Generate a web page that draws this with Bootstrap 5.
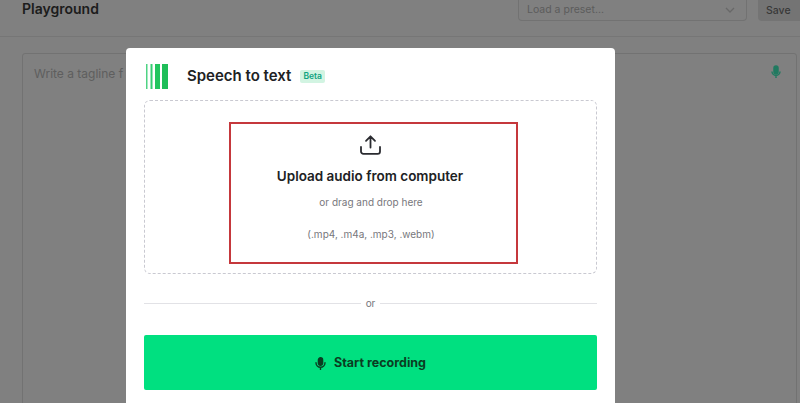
<!DOCTYPE html>
<html lang="en">
<head>
  <meta charset="UTF-8">
  <meta name="viewport" content="width=device-width, initial-scale=1.0">
  <title>Speech to text</title>
  <link href="https://cdn.jsdelivr.net/npm/bootstrap@5.3.0/dist/css/bootstrap.min.css" rel="stylesheet">
  <style>
    html, body {
      height: 100%;
      overflow: hidden;
    }
    body {
      background-color: #808080;
      font-family: Inter, "Liberation Sans", sans-serif;
      color: #202123;
    }
    /* dimmed page behind the dialog */
    .page-head {
      height: 37px;
      padding: 0 0 0 22px;
      border-bottom: 1px solid #767676;
    }
    .page-title {
      font-size: 14px;
      font-weight: 600;
      line-height: 17px;
      color: #1c1c1c;
      margin: 0;
    }
    .preset-box {
      width: 229px;
      height: 21px;
      margin-right: 11px;
      padding: 0 10px 0 8px;
      border: 1px solid #727272;
      border-top: 0;
      border-radius: 0 0 4px 4px;
      font-size: 10.5px;
      color: #5c5c5c;
    }
    .save-box {
      width: 42px;
      height: 21px;
      background: #747474;
      border-radius: 0 0 0 4px;
      font-size: 10.5px;
      font-weight: 500;
      color: #383838;
      padding-left: 8px;
    }
    .prompt-box {
      height: 360px;
      margin: 16px 3px 0 22px;
      padding: 11px 11px;
      border: 1px solid #727272;
      border-radius: 3px;
      font-size: 12px;
      color: #5e5e5e;
    }
    .prompt-mic {
      margin: 0 3px 0 0;
    }
    /* dialog */
    .dialog-box {
      position: fixed;
      left: 126px;
      top: 48px;
      width: 489px;
      height: 370px;
      padding: 15px 18px;
      background: #fff;
      border-radius: 4px;
    }
    .dialog-head {
      height: 26px;
    }
    .app-logo {
      margin-left: 2px;
    }
    .dialog-title {
      font-size: 15px;
      font-weight: 600;
      margin: 0 0 0 19px;
    }
    .beta-tag {
      margin-left: 9px;
      padding: 1px 3px;
      background: #d2f4e2;
      border-radius: 2px;
      font-size: 8.5px;
      font-weight: 600;
      line-height: 11px;
      color: #10a37f;
    }
    .drop-zone {
      height: 174px;
      margin-top: 11px;
      padding: 21px 0 0 5px;
      border: 1px dashed #c9c9d1;
      border-radius: 6px;
    }
    .red-box {
      width: 289px;
      height: 142px;
      padding-top: 11px;
      border: 2px solid #c5383c;
    }
    .upload-icon {
      display: block;
      margin: 0 auto;
      position: relative;
      left: -3px;
    }
    .upload-title {
      font-size: 13.5px;
      font-weight: 600;
      margin: 12px 0 0;
      line-height: 18px;
      position: relative;
      left: -3px;
    }
    .drop-note {
      font-size: 10px;
      color: #77777c;
      margin: 10px 0 0;
      line-height: 14px;
      position: relative;
      left: -2px;
    }
    .drop-types {
      margin-top: 18px;
    }
    .or-row {
      margin-top: 22px;
      font-size: 10px;
      color: #77777c;
      line-height: 14px;
    }
    .or-word {
      padding: 0 5px;
    }
    .or-line {
      height: 1px;
      background: #e2e2e6;
      margin-top: 1px;
    }
    .record-btn {
      height: 55px;
      margin-top: 25px;
      padding-top: 8px;
      background: #00e080;
      border: 0;
      border-radius: 2px;
      font-size: 12.5px;
      font-weight: 700;
      color: #0b3d22;
    }
    .record-btn:hover {
      background: #00e080;
      color: #0b3d22;
    }
  </style>
</head>
<body>
  <!-- page behind the dialog -->
  <div class="page-head d-flex align-items-start">
    <h1 class="page-title flex-grow-1">Playground</h1>
    <div class="preset-box d-flex align-items-center justify-content-between">
      <span>Load a preset...</span>
      <svg width="12" height="8" viewBox="0 0 12 8" fill="none" stroke="#686868" stroke-width="1.3"><path d="M2 2l4 4 4-4"/></svg>
    </div>
    <div class="save-box d-flex align-items-center">Save</div>
  </div>
  <div class="prompt-box d-flex justify-content-between">
    <span>Write a tagline f</span>
    <svg class="prompt-mic" width="12" height="14" viewBox="0 0 12 14" fill="none" stroke="#217a60" stroke-width="1.5"><rect x="4" y="1" width="4" height="8" rx="2" fill="#217a60"/><path d="M2 6.5a4 4 0 0 0 8 0M6 10.5V13"/></svg>
  </div>

  <!-- dialog -->
  <div class="dialog-box" role="dialog">
    <div class="dialog-head d-flex align-items-center">
      <svg class="app-logo" width="22" height="25" viewBox="0 0 22 25">
        <rect x="0" y="0" width="1.5" height="25" fill="#4fd384"/>
        <rect x="4.5" y="0" width="2" height="25" fill="#35cd72"/>
        <rect x="9" y="0" width="5" height="25" fill="#22c55e"/>
        <rect x="16" y="0" width="6" height="25" fill="#1fbe59"/>
      </svg>
      <h2 class="dialog-title">Speech to text</h2>
      <span class="beta-tag">Beta</span>
    </div>

    <div class="drop-zone d-flex justify-content-center">
      <div class="red-box text-center">
        <svg class="upload-icon" width="21" height="20" viewBox="0 0 21 20" fill="none" stroke="#2a2b30" stroke-width="1.8" stroke-linecap="round" stroke-linejoin="round"><path d="M10.5 12.5V1.5M6 5.8l4.5-4.5L15 5.8M1 12v4.5a2.4 2.4 0 0 0 2.4 2.4h14.2a2.4 2.4 0 0 0 2.4-2.4V12"/></svg>
        <p class="upload-title">Upload audio from computer</p>
        <p class="drop-note">or drag and drop here</p>
        <p class="drop-note drop-types">(.mp4, .m4a, .mp3, .webm)</p>
      </div>
    </div>

    <div class="or-row d-flex align-items-center">
      <div class="or-line flex-grow-1"></div>
      <span class="or-word">or</span>
      <div class="or-line flex-grow-1"></div>
    </div>

    <button type="button" class="btn record-btn w-100 d-flex align-items-center justify-content-center gap-2">
      <svg width="11" height="13" viewBox="0 0 11 13" fill="none" stroke="#0b3d22" stroke-width="1.4" stroke-linecap="round"><rect x="3.4" y="0.8" width="4.2" height="7.4" rx="2.1" fill="#0b3d22"/><path d="M1 5.8a4.5 4.5 0 0 0 9 0M5.5 10.5v2"/></svg>
      Start recording
    </button>
  </div>

  <script src="https://cdn.jsdelivr.net/npm/bootstrap@5.3.0/dist/js/bootstrap.bundle.min.js"></script>
</body>
</html>
